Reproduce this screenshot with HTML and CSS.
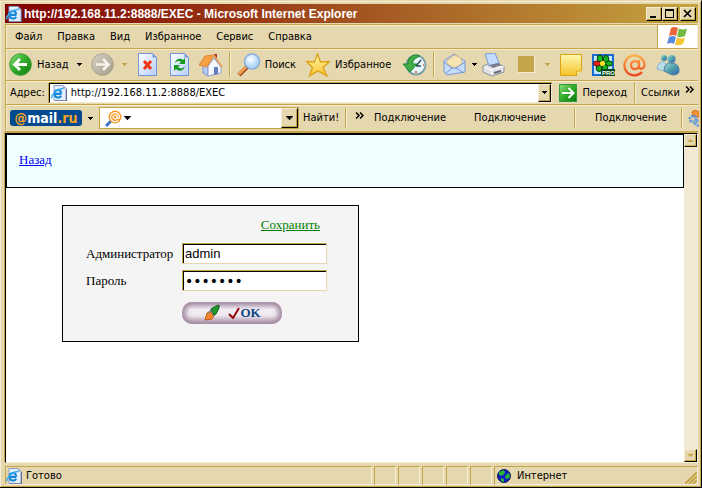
FILE: index.html
```html
<!DOCTYPE html>
<html lang="ru">
<head>
<meta charset="utf-8">
<title>http://192.168.11.2:8888/EXEC</title>
<link rel="stylesheet" href="styles.css">
</head>
<body>
<svg class="defs" width="0" height="0" aria-hidden="true">
  <defs>
    <linearGradient id="green" x1="0" y1="0" x2="1" y2="1"><stop offset="0" stop-color="#8fe07c"/><stop offset=".45" stop-color="#35ae2c"/><stop offset="1" stop-color="#087c0c"/></linearGradient>
    <linearGradient id="gray" x1="0" y1="0" x2="1" y2="1"><stop offset="0" stop-color="#d8d3c6"/><stop offset="1" stop-color="#a39c88"/></linearGradient>
    <linearGradient id="paper" x1="0" y1="0" x2="1" y2="1"><stop offset="0" stop-color="#fff"/><stop offset="1" stop-color="#b4cdfa"/></linearGradient>
    <linearGradient id="gold" x1="0" y1="0" x2="0" y2="1"><stop offset="0" stop-color="#fff8b0"/><stop offset="1" stop-color="#f6c228"/></linearGradient>
    <linearGradient id="at" x1="0" y1="0" x2="0" y2="1"><stop offset="0" stop-color="#ffb04a"/><stop offset="1" stop-color="#ec4520"/></linearGradient>
    <linearGradient id="buddy" x1="0" y1="0" x2="1" y2="1"><stop offset="0" stop-color="#a6e0dc"/><stop offset=".5" stop-color="#4e9fa8"/><stop offset="1" stop-color="#3262b0"/></linearGradient>
    <radialGradient id="lens" cx=".4" cy=".35"><stop offset="0" stop-color="#fff"/><stop offset="1" stop-color="#b0d8fb"/></radialGradient>
    <symbol id="ie" viewBox="0 0 16 16">
      <path d="M3 .5h9l3 3v12H3z" fill="#e6effc" stroke="#8b9fcb"/><path d="M12 .5v3h3z" fill="#8ba3dc"/><path d="M15.5 4v12H4" fill="none" stroke="#656a8c"/>
      <path d="M10.5 8.8H3.6c0-5 6.400-5 6.600-.6M3.600 9c.2 4.500 5.200 4.300 6.600 1.800" fill="none" stroke="#1688d8" stroke-width="2.200"/>
      <path d="M1 13.500C-.5 10 6 3.500 12.500 3.500" fill="none" stroke="#35aef0" stroke-width="1.300"/>
    </symbol>
    <symbol id="down" viewBox="0 0 5 3"><path d="M0 0h5v1H4v1H3v1H2V2H1V1H0z" fill="currentColor"/></symbol>
    <symbol id="more" viewBox="0 0 9 7"><path d="M1 .5l3 3-3 3M5 .5l3 3-3 3" fill="none" stroke="#000" stroke-width="1.500"/></symbol>
  </defs>
</svg>
<div class="window">
  <header class="title">
    <svg class="i16"><use href="#ie"/></svg>
    <h1>http://192.168.11.2:8888/EXEC - Microsoft Internet Explorer</h1>
    <div class="caption">
      <button aria-label="Свернуть"><svg width="10" height="9"><path d="M1 7h6v2H1z"/></svg></button>
      <button aria-label="Развернуть"><svg width="10" height="9"><path d="M0 0h9v9H0zM1 2v6h7V2z" fill-rule="evenodd"/></svg></button>
      <button class="close" aria-label="Закрыть"><svg width="10" height="9"><path d="M1 1l7 7M8 1L1 8" stroke="#000" stroke-width="1.600"/></svg></button>
    </div>
  </header>

  <nav class="menu">
    <button>Файл</button><button>Правка</button><button>Вид</button><button>Избранное</button><button>Сервис</button><button>Справка</button>
    <div class="flag">
      <svg width="21" height="19" viewBox="0 0 21 19"><path d="M4 1q3-2 7 0L9 9Q6 7 2 9z" fill="#ec6337"/><path d="M12 1.500q4 2 8 0L18 9q-4 2-8 .5z" fill="#71b940"/><path d="M2 10q4-2 7 0l-2 7Q4 15 0 17z" fill="#5689dd"/><path d="M10 10.500q4 2 8 0L16 17q-4 2-8 .5z" fill="#f8c633"/></svg>
    </div>
  </nav>

  <div class="bar tools">
    <button class="back"><svg width="23" height="23"><circle cx="11.500" cy="11.500" r="10.800" fill="url(#green)" stroke="#3a9d35"/><path d="M18 11.500H6M11 6l-5.500 5.500L11 17" fill="none" stroke="#fff" stroke-width="2.800"/></svg>Назад</button>
    <button class="arrow" aria-label="Список назад"><svg class="tri"><use href="#down"/></svg></button>
    <button class="fwd" aria-label="Вперед"><svg width="23" height="23"><circle cx="11.500" cy="11.500" r="10.800" fill="url(#gray)" stroke="#a9a28d"/><path d="M5 11.500h12M12 6l5.500 5.500L12 17" fill="none" stroke="#f6f3e9" stroke-width="2.600"/></svg></button>
    <button class="arrow off" aria-label="Список вперед"><svg class="tri"><use href="#down"/></svg></button>
    <button class="pg" aria-label="Остановить"><svg width="20" height="23"><path d="M.5.500h14l4 4v18H.500z" fill="url(#paper)" stroke="#7395dc"/><path d="M14.500.500v4h4z" fill="#7196e2"/><path d="M6 8l7 8M13 8l-7 8" stroke="#f03a16" stroke-width="3"/></svg></button>
    <button class="pg" aria-label="Обновить"><svg width="20" height="23"><path d="M.5.500h14l4 4v18H.500z" fill="url(#paper)" stroke="#7395dc"/><path d="M14.500.500v4h4z" fill="#7196e2"/><path d="M5 10c1-5 6-5 8-3l2-2v6H9l2-2c-2-2-4-1-6 1zM15 13c-1 5-6 6-9 3l-2 2v-6h6l-2 2c2 2 5 2 7-1z" fill="#159b20"/></svg></button>
    <button class="home" aria-label="Домой"><svg width="24" height="24"><path d="M15 1h3v8h-3z" fill="#b23424"/><path d="M4 11l5 3v9l-5-3z" fill="#b8caf0" stroke="#7b94cc"/><path d="M9 13l6-8 7 9v6l-13 3z" fill="#f3f7ff" stroke="#8da2d2"/><path d="M0 12L6 3l9-1-7 12z" fill="#f7a041" stroke="#e1873b"/><path d="M14.500 2L23 14" stroke="#e4a269" stroke-width="2"/><path d="M15 14h4v7l-4 1z" fill="#637dba"/></svg></button>
    <i class="sep"></i>
    <button class="find"><svg width="24" height="24"><path d="M10 14l-8 8" stroke="#a54c22" stroke-width="4.500"/><path d="M9 14l-7 7" stroke="#f7a258" stroke-width="2.500"/><circle cx="15" cy="8.500" r="7.500" fill="url(#lens)" stroke="#87acdc" stroke-width="1.500"/></svg>Поиск</button>
    <button class="fav"><svg width="24" height="24"><path d="M11.500 1l3 8 9-.5-6.500 6 4 8.500-9-5-8.500 5 3-8.500L.5 8.500l8 .5z" fill="url(#gold)" stroke="#dda116" stroke-width="1.300"/></svg>Избранное</button>
    <button class="hist" aria-label="Журнал"><svg width="24" height="24"><circle cx="13" cy="12" r="9.500" fill="#e6f6fb" stroke="#7fa1a8" stroke-width="2"/><path d="M13 13l5-6M13 13h5" stroke="#31505d" stroke-width="1.500"/><path d="M13 18v2M20 12h1" stroke="#e0502a" stroke-width="1.500"/><path d="M17 3C11 0 4 4 5 11H0l7 8 7-8H10c-1-3 2-6 7-8z" fill="#42ad45" stroke="#19832b"/></svg></button>
    <i class="sep"></i>
    <button class="mail" aria-label="Почта"><svg width="24" height="24"><path d="M1 8l10-7 11 7v11l-18 3-3-3z" fill="#c5dcfb" stroke="#7998d4"/><path d="M4 8l7-6 7 3 1 6-8 4-7-4z" fill="#f9e5b1" stroke="#d7b986"/><path d="M1 9l8 6L2 21M22 9l-9 6 8 5M9 15h4" fill="none" stroke="#7796d4"/></svg></button>
    <button class="arrow tight" aria-label="Список почты"><svg class="tri"><use href="#down"/></svg></button>
    <button class="print" aria-label="Печать"><svg width="24" height="24"><path d="M1 13l7-3 14 3v6l-12 4-9-4z" fill="#e1e2e6" stroke="#8e919c"/><path d="M3 1l10-1 4 10-10 3z" fill="#c3dcfd" stroke="#7b99d2"/><path d="M2 14l8 3 12-4M10 17v5" fill="none" stroke="#fff"/><path d="M7 12l10-2 2 2-8 3z" fill="#777b8b"/><path d="M12 20l7-2" stroke="#65697a" stroke-width="2"/></svg></button>
    <button class="blank" aria-label="Правка"><span></span></button>
    <button class="arrow off" aria-label="Список правки"><svg class="tri"><use href="#down"/></svg></button>
    <button class="note" aria-label="Заметка"><svg width="22" height="22"><path d="M.5.500h21v16l-5 5H.500z" fill="url(#gold)" stroke="#d9a514"/><path d="M16.500 21.500v-4l5-1" fill="#fff3a2" stroke="#d9a514"/></svg></button>
    <button class="icq" aria-label="ICQ Pro"><svg width="23" height="22"><path d="M1 1h20v20H1z" fill="#c4e9fc" stroke="#176bd2" stroke-width="2"/><g fill="#12b51b" stroke="#063c0a"><ellipse cx="8" cy="4.500" rx="2.800" ry="3.500"/><ellipse cx="14" cy="5" rx="2.800" ry="3.500"/><ellipse cx="17" cy="9.500" rx="3.500" ry="2.500"/><ellipse cx="13" cy="14" rx="2.800" ry="3.500"/><ellipse cx="7" cy="14" rx="2.800" ry="3.500"/></g><ellipse cx="5" cy="9.500" rx="3.500" ry="2.500" fill="#e7251a" stroke="#631003"/><circle cx="10.500" cy="9.500" r="2.500" fill="#ffe32b"/><path d="M9 15h14v7H9z" fill="#064b16"/><text x="10" y="21" class="pro">PRO</text></svg></button>
    <button class="at" aria-label="Mail.ru"><svg width="24" height="24"><path d="M19 19a10 10 0 1 1 2.500-7c0 4-5 5-5.500 2V7M16 12a4 4 0 1 1-8 0 4 4 0 0 1 8 0z" fill="none" stroke="url(#at)" stroke-width="2.300"/></svg></button>
    <button class="msn" aria-label="Messenger"><svg width="24" height="24"><circle cx="8" cy="5" r="3" fill="url(#buddy)"/><path d="M1 16q1-8 7-7l5 5-5 4z" fill="#bbdce9" stroke="#8bb9cc"/><circle cx="15.500" cy="6" r="4" fill="url(#buddy)"/><path d="M8 18q0-9 8-8t7 9q-1 3-7 3z" fill="url(#buddy)" stroke="#52819e"/></svg></button>
  </div>

  <form class="bar address">
    <label for="url">Адрес:</label>
    <div class="combo"><svg class="i16"><use href="#ie"/></svg><input id="url" value="http://192.168.11.2:8888/EXEC"><button type="button" class="drop" aria-label="Список адресов"><svg class="tri"><use href="#down"/></svg></button></div>
    <button type="button" class="go"><svg width="18" height="18"><path d="M.5.500h17v17H.500z" fill="url(#green)" stroke="#34983a"/><path d="M3 9h11M9.500 4l5 5-5 5" fill="none" stroke="#fff" stroke-width="2"/></svg>Переход</button>
    <i class="sep line"></i>
    <button type="button" class="links">Ссылки<svg width="9" height="7"><use href="#more"/></svg></button>
  </form>

  <form class="bar mailru">
    <button type="button" class="brand"><b>@</b>mail<b>.ru</b></button>
    <button type="button" class="arrow" aria-label="Меню Mail.ru"><svg class="tri"><use href="#down"/></svg></button>
    <div class="combo search"><svg width="17" height="17"><path d="M6 11l-5 5" stroke="#4373c4" stroke-width="3"/><circle cx="10" cy="7" r="6.500" fill="#f99a22"/><path d="M13 10.500a4.500 4.500 0 1 1 1.500-3.500q-1 3-2.500.5V4.500M12 7a2 2 0 1 1-4 0 2 2 0 0 1 4 0z" fill="none" stroke="#fff" stroke-width="1.200"/></svg><svg class="tri big"><use href="#down"/></svg><input aria-label="Поиск"><button type="button" class="drop" aria-label="Список запросов"><svg class="tri big"><use href="#down"/></svg></button></div>
    <button type="button" class="go-find">Найти!</button>
    <i class="sep"></i>
    <button type="button" class="chev" aria-label="Ещё"><svg width="9" height="7"><use href="#more"/></svg></button>
    <button type="button" class="conn">Подключение</button>
    <button type="button" class="conn">Подключение</button>
    <i class="sep"></i>
    <button type="button" class="conn last">Подключение</button>
    <i class="sep"></i>
    <svg class="gear" width="11" height="17"><path d="M4 2l3-2 4 2v5H6z" fill="#f59331" stroke="#d66b18"/><circle cx="5" cy="9" r="3" fill="none" stroke="#5994df" stroke-width="3" stroke-dasharray="2 1"/><circle cx="10" cy="13" r="2.500" fill="none" stroke="#5994df" stroke-width="3" stroke-dasharray="2 1"/></svg>
  </form>

  <div class="view">
    <main>
      <div class="banner"><a href="#">Назад</a></div>
      <form class="login">
        <a href="#" class="save">Сохранить</a>
        <label for="adm">Администратор</label><input id="adm" value="admin">
        <label for="pwd">Пароль</label><input id="pwd" type="password" value="1234567">
        <button type="button" class="ok">
          <svg width="18" height="18"><path d="M2 16l2-7 3-1 4 4-2 3z" fill="#f8832a" stroke="#c45a12"/><path d="M7 6l5 5M5 9l3-3M10 12l3-3" stroke="#7d8287" stroke-width="1.500"/><path d="M8 5l5-3 3-1v3l-3 6-2 1z" fill="#219a29" stroke="#0d5f16"/></svg>
          <svg class="tick" width="12" height="12"><path d="M1 7l4 4 6-10" fill="none" stroke="#930808" stroke-width="2"/></svg>OK
        </button>
      </form>
    </main>
    <div class="scroll">
      <button aria-label="Вверх"><svg class="tri up"><use href="#down"/></svg></button>
      <button aria-label="Вниз"><svg class="tri"><use href="#down"/></svg></button>
    </div>
  </div>

  <footer class="status">
    <div class="cell main"><svg class="i16"><use href="#ie"/></svg>Готово</div>
    <div class="cell"></div><div class="cell"></div><div class="cell"></div><div class="cell"></div><div class="cell"></div>
    <div class="cell zone"><svg width="14" height="14"><circle cx="7" cy="7" r="6.500" fill="#1018c8" stroke="#182048"/><path d="M2 3l5-2 1 3-3 3-3-1zM9 6l3-2 1 4-3 2-2-1zM4 9l3 1v3l-3-1z" fill="#27b836"/></svg>Интернет
      <svg class="grip" width="12" height="12"><path d="M0 12L12 0M4 12l8-8M8 12l4-4" stroke="#c6a54a" stroke-width="2"/></svg></div>
  </footer>
</div>
</body>
</html>
```
FILE: styles.css
```css
:root {
  --face: #e5d7ae;
  --light: #f5ecd2;
  --dark: #c6a54a;
}
* { box-sizing: border-box; }
body { margin: 0; background: var(--face); font: 11px/14px "DejaVu Sans Condensed", "Liberation Sans", sans-serif; color: #000; }
button, input { font: inherit; color: inherit; }
button { display: flex; flex: none; align-items: center; padding: 0; border: 0; background: none; white-space: nowrap; }
svg { display: block; flex: none; }
.defs { position: absolute; }
.i16 { width: 16px; height: 16px; }
.tri { width: 5px; height: 3px; }
.tri.big { width: 7px; height: 4px; }

.window {
  display: flex; flex-direction: column; min-height: 100vh; padding: 3px 3px 2px 5px;
  border: 1px solid var(--face); border-right-color: #000; border-bottom-color: #000; border-left: 0;
  box-shadow: inset 1px 1px var(--light), inset -1px -1px var(--dark);
}
.title { display: flex; align-items: center; height: 19px; padding: 0 2px 0 1px; background: linear-gradient(90deg, #800000, #c5a53f); color: #fff; }
.title h1 { flex: 1; margin: 0 0 0 2px; font: bold 12px/14px "Liberation Sans", sans-serif; white-space: nowrap; }
.caption { display: flex; }
.caption button { width: 16px; height: 14px; justify-content: center; }
.caption .close { margin-left: 2px; }
.caption button, .drop, .scroll button {
  background: var(--face);
  border: 1px solid; border-color: var(--light) #000 #000 var(--light);
  box-shadow: inset -1px -1px var(--dark);
}

.menu { display: flex; height: 25px; margin-top: 1px; padding-left: 9px; gap: 15px; border: 1px solid var(--dark); border-right-color: var(--light); border-left-color: var(--dark); box-shadow: inset 1px 1px var(--light); }
.flag { display: flex; align-items: center; justify-content: center; width: 40px; margin-left: auto; background: #fff; border-left: 1px solid var(--dark); }

.bar { display: flex; align-items: center; border-left: 1px solid var(--dark); border-bottom: 1px solid var(--dark); box-shadow: inset 1px 1px var(--light); }
.sep { flex: none; align-self: stretch; width: 2px; margin: 3px 0; border-left: 1px solid var(--dark); border-right: 1px solid var(--light); }
.arrow { justify-content: center; width: 22px; height: 22px; }
.off { color: var(--dark); }

.tools { height: 32px; padding-left: 3px; }
.back { gap: 5px; }
.pg { margin: 0 12px 0 2px; }
.pg + .pg { margin: 0 9px 0 0; }
.home { margin-right: 6px; }
.find { margin: 0 10px 0 6px; gap: 4px; }
.fav { gap: 5px; }
.hist { margin: 0 6px 0 12px; }
.mail { margin-left: 8px; }
.arrow.tight { width: 15px; }
.print { margin-right: 10px; }
.blank span { width: 17px; height: 17px; background: var(--dark); border: 1px solid var(--light); border-width: 0 1px 1px 0; margin-left: 2px; }
.blank + .arrow { width: 24px; }
.note { margin-left: 1px; }
.icq { margin-left: 10px; }
.at { margin-left: 8px; }
.msn { margin-left: 9px; }
.pro { font: bold 6px "Liberation Sans", sans-serif; fill: #fff; }

.address { height: 24px; padding-left: 4px; }
.combo { display: flex; align-items: center; height: 20px; background: #fff; border: 1px solid; border-color: #000 var(--light) var(--light) #000; box-shadow: 0 -1px var(--dark), -1px 0 var(--dark); }
.combo input { flex: 1; min-width: 0; padding: 0 4px; border: 0; background: none; outline: 0; }
.combo .drop { justify-content: center; align-self: stretch; height: auto; width: 13px; }
.address .combo { flex: 1; margin-left: 4px; padding-left: 1px; }
.go { gap: 5px; margin: 0 7px; }
.line { margin: 1px 0; }
.links { gap: 5px; margin: 0 4px 0 5px; }
.links svg { margin-bottom: 6px; }

.mailru { height: 27px; padding-left: 4px; }
.brand { justify-content: center; width: 72px; height: 16px; border-radius: 3px; background: #024a90; color: #fff; font: bold 14px/16px "DejaVu Sans Condensed", sans-serif; }
.brand b { color: #f9a51e; }
.mailru .arrow { width: 17px; }
.search { flex: none; width: 200px; height: 22px; padding-left: 5px; border-color: var(--dark); box-shadow: none; }
.search .tri { margin-left: 2px; }
.search .drop { width: 17px; }
.search .drop .tri { margin: 0; }
.go-find { margin: 0 6px 0 4px; }
.chev { margin: 0 10px 6px 8px; }
.conn { margin-right: 28px; }
.conn.last { margin: 0 14px 0 19px; }
.gear { margin: 0 0 0 5px; }

.view { flex: 1; display: flex; margin: 1px 0 3px; border: 1px solid; border-color: #000 var(--light) var(--light) #000; background: #fff; box-shadow: -1px -1px var(--dark); }
main { flex: 1; font: 13px/16px "Liberation Serif", serif; }
.banner { height: 54px; padding: 17px 12px; border: 1px solid #000; background: #f0ffff; }
.banner a { color: #00f; }
.scroll { display: flex; flex-direction: column; justify-content: space-between; width: 13px; background: #f2e9d4; }
.scroll button { justify-content: center; width: 13px; height: 13px; color: var(--dark); }
.up { transform: rotate(180deg); }

.login {
  display: grid; grid-template-columns: 96px 145px; gap: 6px 0; align-items: center;
  width: 297px; margin: 17px 0 0 56px; padding: 11px 23px 17px; border: 1px solid #000; background: #f4f4f4;
}
.login .save { grid-column: 1 / 3; justify-self: end; margin: 0 7px 4px 0; color: #008000; }
.login input { height: 21px; padding: 0 2px; border: 1px solid; border-color: var(--dark) var(--face) var(--face) var(--dark); box-shadow: inset 1px 1px #000; background: #fff; font: 13px/16px "Liberation Sans", sans-serif; outline: 0; }
.login input[type="password"] { font: 14px/16px "DejaVu Sans", sans-serif; }
.ok {
  grid-column: 2; justify-content: center; width: 100px; height: 22px; margin-top: 5px; border-radius: 10px;
  background: linear-gradient(#a68fa5, #f3edf4 35%, #efe8ef 60%, #a38ca2); box-shadow: inset 4px 0 4px #a891a8, inset -4px 0 4px #a891a8;
  color: #0c4684; font: bold 13px/16px "Liberation Serif", serif;
}
.tick { margin-left: 7px; }

.status { display: flex; gap: 2px; height: 19px; }
.cell { width: 22px; display: flex; align-items: center; border: 1px solid; border-color: var(--dark) var(--light) var(--light) var(--dark); }
.cell.main { flex: 1; gap: 4px; }
.cell.zone { width: 204px; gap: 6px; padding-left: 2px; }
.grip { margin: auto 0 0 auto; }
```
